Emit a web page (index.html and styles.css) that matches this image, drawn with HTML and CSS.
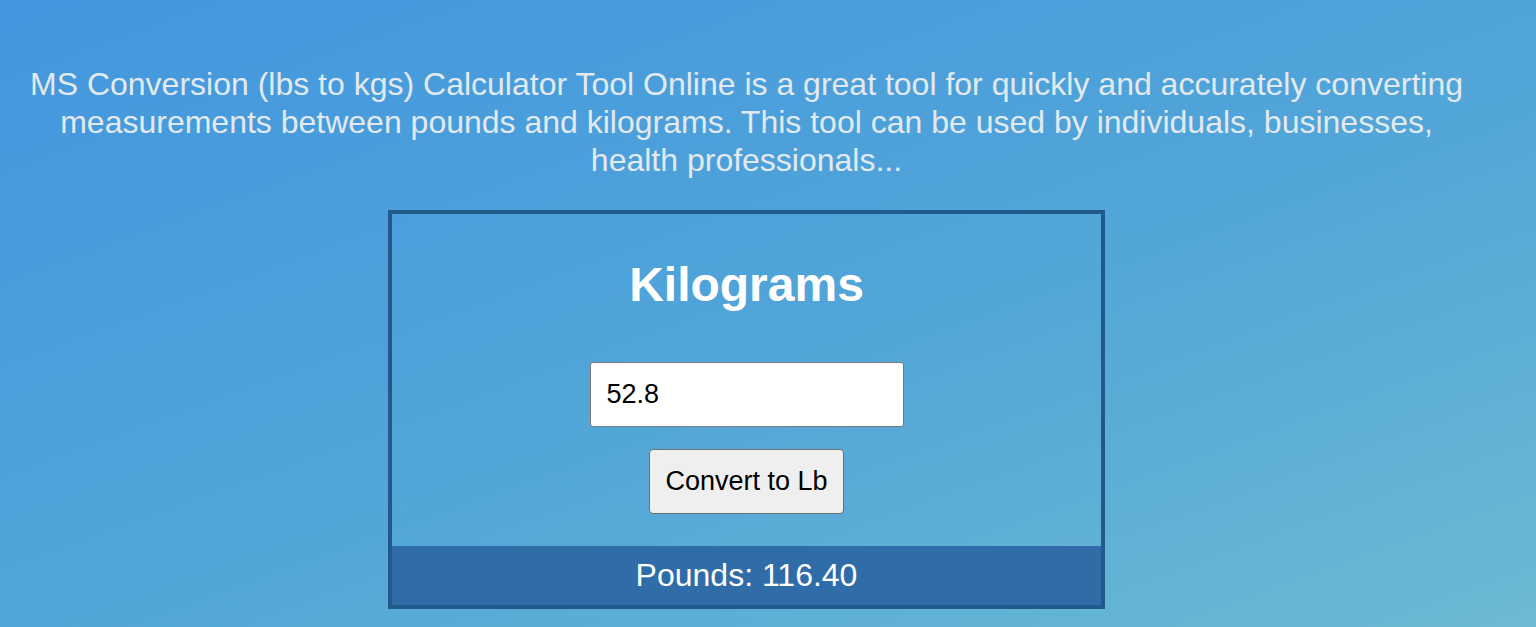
FILE: index.html
```html
<!DOCTYPE html>
<html>
<head>
<meta charset="utf-8">
<link rel="stylesheet" href="styles.css">
</head>
<body>
<div class="page">
  <p class="desc">MS Conversion (lbs to kgs) Calculator Tool Online is a great tool for quickly and accurately converting measurements between pounds and kilograms. This tool can be used by individuals, businesses, health professionals...</p>
  <div class="card">
    <h2 class="title">Kilograms</h2>
    <input class="field" type="text" value="52.8">
    <button class="btn">Convert to Lb</button>
    <div class="result">Pounds: 116.40</div>
  </div>
</div>
</body>
</html>
```
FILE: styles.css
```css
html, body {
  margin: 0;
  padding: 0;
}
body {
  width: 1536px;
  height: 627px;
  overflow: hidden;
  background: linear-gradient(160deg, #4396de 0%, #52a6d8 55%, #6cbad2 100%);
  font-family: "Liberation Sans", Arial, sans-serif;
}
.page {
  width: 1493px;
  padding-top: 65px;
  display: flex;
  flex-direction: column;
  align-items: center;
}
.desc {
  margin: 0;
  width: 1446px;
  text-align: center;
  font-size: 32px;
  line-height: 38px;
  color: #e2e9ef;
}
.card {
  margin-top: 31px;
  width: 717px;
  box-sizing: border-box;
  border: 4px solid #1f5a8a;
  display: flex;
  flex-direction: column;
  align-items: center;
}
.title {
  margin: 43px 0 0;
  font-size: 48px;
  line-height: 56px;
  font-weight: bold;
  color: #ffffff;
}
.field {
  margin-top: 49px;
  width: 314px;
  height: 65px;
  box-sizing: border-box;
  border: 1px solid #7a7a7a;
  border-radius: 3px;
  padding: 0 16px;
  font-family: "Liberation Sans", Arial, sans-serif;
  font-size: 27px;
  color: #000;
  background: #fff;
}
.btn {
  margin-top: 22px;
  width: 195px;
  height: 65px;
  box-sizing: border-box;
  border: 1px solid #6f6f6f;
  border-radius: 4px;
  background: #efefef;
  font-family: "Liberation Sans", Arial, sans-serif;
  font-size: 27px;
  color: #000;
  padding: 0;
}
.result {
  margin-top: 32px;
  align-self: stretch;
  height: 59px;
  background: #2f6ca8;
  color: #fff;
  font-size: 32px;
  line-height: 59px;
  text-align: center;
}
```
